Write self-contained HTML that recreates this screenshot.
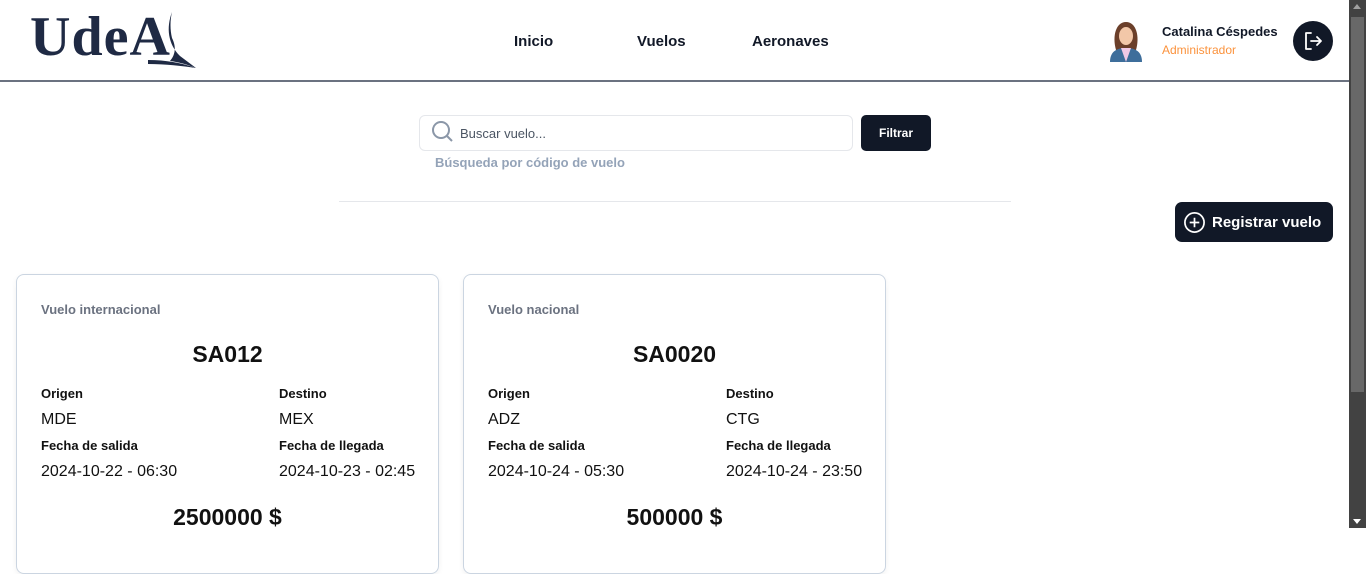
<!DOCTYPE html>
<html><head><meta charset="utf-8"><style>
*{box-sizing:border-box;margin:0;padding:0}
body{width:1366px;height:528px;overflow:hidden;background:#fff;font-family:"Liberation Sans","DejaVu Sans",sans-serif;color:#111;position:relative}
.abs{position:absolute}
.hdr{left:0;top:0;width:1349px;height:82px;border-bottom:2px solid #6b7280}
.nav{font-size:15px;font-weight:bold;color:#111827;top:33px}
.sb{left:1349px;top:0;width:17px;height:528px;background:#424242}
.thumb{left:1351px;top:17px;width:13px;height:375px;background:#686868}
.card{width:423px;height:300px;border:1px solid #cbd5e1;border-radius:8px;top:274px;box-shadow:0 2px 6px rgba(0,0,0,.06)}
.card .t{position:absolute;left:24px;top:27px;font-size:13px;color:#6b7280;font-weight:bold}
.card .c{position:absolute;left:0;width:100%;text-align:center;top:66px;font-size:23px;font-weight:bold}
.card .l{position:absolute;font-size:13px;font-weight:bold}
.card .v{position:absolute;font-size:16px;top:0}
.card .p{position:absolute;left:0;width:100%;text-align:center;top:229px;font-size:23px;font-weight:bold}
</style></head><body>
<div class="abs hdr"></div>
<div class="abs" style="left:30px;top:9px;font-family:'Liberation Serif',serif;font-weight:bold;font-size:56px;color:#1f2a44;letter-spacing:1px;line-height:56px">UdeA</div>
<svg class="abs" style="left:148px;top:10px" width="52" height="60" viewBox="0 0 52 60"><path d="M24 2 C18 18 20 34 32 46 L48 58 C38 54 30 52 22 51 C28 44 28 36 24 28 C22 20 22 10 24 2Z" fill="#1f2a44"/><path d="M0 50 C18 50 34 53 48 58 C34 56 18 54 0 54Z" fill="#1f2a44"/></svg>
<div class="abs nav" style="left:514px">Inicio</div>
<div class="abs nav" style="left:637px">Vuelos</div>
<div class="abs nav" style="left:752px">Aeronaves</div>
<svg class="abs" style="left:1108px;top:20px" width="36" height="42" viewBox="0 0 36 42"><path d="M8 30 C4 16 8 2 18 2 C28 2 32 16 28 30Z" fill="#6b3f2a"/><ellipse cx="18" cy="16" rx="7" ry="9" fill="#f2c7a8"/><path d="M2 42 C2 32 8 28 18 28 C28 28 34 32 34 42Z" fill="#3e6e9b"/><path d="M13 28 L18 42 L23 28Z" fill="#f1c9e6"/></svg>
<div class="abs" style="left:1162px;top:24px;font-size:13px;font-weight:bold;color:#111827">Catalina Céspedes</div>
<div class="abs" style="left:1162px;top:43px;font-size:12px;color:#fb923c">Administrador</div>
<div class="abs" style="left:1293px;top:21px;width:40px;height:40px;border-radius:50%;background:#111827"></div>
<svg class="abs" style="left:1303px;top:31px" width="20" height="20" viewBox="0 0 20 20" fill="none" stroke="#fff" stroke-width="1.8" stroke-linecap="round" stroke-linejoin="round"><path d="M8 2H3v16h5M8 10h10M14 6l4 4-4 4"/></svg>
<div class="abs" style="left:419px;top:115px;width:434px;height:36px;border:1px solid #e5e7eb;border-radius:6px"></div>
<svg class="abs" style="left:431px;top:120px" width="24" height="24" viewBox="0 0 24 24" fill="none" stroke="#8b97a8" stroke-width="2"><circle cx="10" cy="10" r="8"/><path d="M16 16l5 5"/></svg>
<div class="abs" style="left:460px;top:126px;font-size:13px;color:#4b5563">Buscar vuelo...</div>
<div class="abs" style="left:861px;top:115px;width:70px;height:36px;background:#111827;border-radius:5px;color:#fff;font-size:12px;font-weight:bold;text-align:center;line-height:36px">Filtrar</div>
<div class="abs" style="left:435px;top:155px;font-size:13px;font-weight:bold;color:#94a3b8">Búsqueda por código de vuelo</div>
<div class="abs" style="left:339px;top:201px;width:672px;height:1px;background:#e5e7eb"></div>
<div class="abs" style="left:1175px;top:202px;width:158px;height:40px;background:#111827;border-radius:7px"></div>
<svg class="abs" style="left:1183px;top:211px" width="23" height="23" viewBox="0 0 24 24" fill="none" stroke="#fff" stroke-width="1.8"><circle cx="12" cy="12" r="10"/><path d="M12 7v10M7 12h10"/></svg>
<div class="abs" style="left:1212px;top:214px;font-size:15px;font-weight:bold;color:#fff">Registrar vuelo</div>
<div class="abs card" style="left:16px">
<div class="t">Vuelo internacional</div><div class="c">SA012</div>
<div class="l" style="left:24px;top:111px">Origen</div><div class="l" style="left:262px;top:111px">Destino</div>
<div class="v" style="left:24px;top:136px">MDE</div><div class="v" style="left:262px;top:136px">MEX</div>
<div class="l" style="left:24px;top:163px">Fecha de salida</div><div class="l" style="left:262px;top:163px">Fecha de llegada</div>
<div class="v" style="left:24px;top:188px">2024-10-22 - 06:30</div><div class="v" style="left:262px;top:188px">2024-10-23 - 02:45</div>
<div class="p">2500000 $</div></div>
<div class="abs card" style="left:463px">
<div class="t">Vuelo nacional</div><div class="c">SA0020</div>
<div class="l" style="left:24px;top:111px">Origen</div><div class="l" style="left:262px;top:111px">Destino</div>
<div class="v" style="left:24px;top:136px">ADZ</div><div class="v" style="left:262px;top:136px">CTG</div>
<div class="l" style="left:24px;top:163px">Fecha de salida</div><div class="l" style="left:262px;top:163px">Fecha de llegada</div>
<div class="v" style="left:24px;top:188px">2024-10-24 - 05:30</div><div class="v" style="left:262px;top:188px">2024-10-24 - 23:50</div>
<div class="p">500000 $</div></div>
<div class="abs sb"></div><div class="abs thumb"></div>
<div class="abs" style="left:1353px;top:4px;width:0;height:0;border-left:4px solid transparent;border-right:4px solid transparent;border-bottom:5px solid #a0a0a0"></div>
<div class="abs" style="left:1353px;top:519px;width:0;height:0;border-left:4px solid transparent;border-right:4px solid transparent;border-top:5px solid #fff"></div>
</body></html>
